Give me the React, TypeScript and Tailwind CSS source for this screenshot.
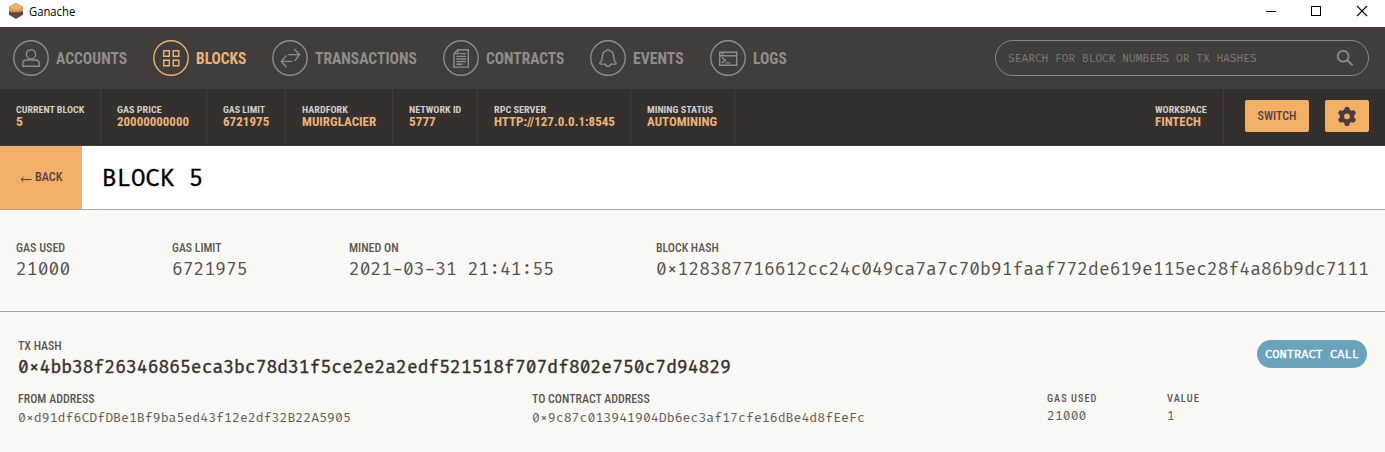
import { useLayoutEffect, useRef, useState } from "react";
import type { ReactNode } from "react";

/* Condenses a single line of text so that it fills exactly `w` pixels. */
function Fit({ w, className = "", children }: { w: number; className?: string; children: ReactNode }) {
  const ref = useRef<HTMLSpanElement>(null);
  const [scale, setScale] = useState(1);
  useLayoutEffect(() => {
    if (ref.current) setScale(w / ref.current.offsetWidth);
  }, [w]);
  return (
    <span className={`block overflow-visible whitespace-nowrap ${className}`} style={{ width: w }}>
      <span ref={ref} className="inline-block origin-left align-top" style={{ transform: `scaleX(${scale})` }}>
        {children}
      </span>
    </span>
  );
}

const COND = "font-['Roboto_Condensed',Roboto,sans-serif]";
const MONO = "font-['Fira_Code','DejaVu_Sans_Mono',monospace]";

const navItems: { label: string; w: number; active?: boolean; icon: ReactNode }[] = [
  {
    label: "ACCOUNTS",
    w: 71,
    icon: (
      <>
        <circle cx="18" cy="14.3" r="4.6" />
        <path d="M9.8 26.2v-2.6c0-2.2 1.6-3.6 3.8-3.6h8.8c2.2 0 3.8 1.4 3.8 3.6v2.6z" />
      </>
    ),
  },
  {
    label: "BLOCKS",
    w: 50,
    active: true,
    icon: <path d="M10.7 10.7h5.6v5.6h-5.6zM20.2 10.7h5.6v5.6h-5.6zM10.7 20.2h5.6v5.6h-5.6zM20.2 20.2h5.6v5.6h-5.6z" />,
  },
  {
    label: "TRANSACTIONS",
    w: 102,
    icon: <path d="M16.2 14.6h10.6M22.2 9l5.2 5.6-4.6 6.2M20.2 21.4H9.4M14.4 15.4l-5 6 5 5.6" />,
  },
  {
    label: "CONTRACTS",
    w: 78,
    icon: (
      <>
        <path d="M15 9.7h10.3v17.4H11V13.6z" />
        <path d="M15 9.7v3.9h-4" />
        <path d="M16.5 13.6H23M13.3 16.4H23M13.3 19H23M13.3 21.6H23M13.3 24.2h6.4" />
      </>
    ),
  },
  {
    label: "EVENTS",
    w: 51,
    icon: (
      <path d="M16.6 10.6a1.5 1.5 0 0 1 2.8 0c2.7.7 4.2 2.9 4.2 5.7 0 3.4.6 4.9 2.3 6.300.5.5.2 1.5-.6 1.5h-4.800c-.3 1.5-1.1 2.3-2.5 2.3s-2.2-.8-2.5-2.3h-4.800c-.8 0-1.1-1-.6-1.500 1.7-1.4 2.3-2.9 2.3-6.300 0-2.8 1.5-5 4.2-5.700z" />
    ),
  },
  {
    label: "LOGS",
    w: 34,
    icon: (
      <>
        <path d="M9.7 12.2h17v13.1h-17zM9.7 15.7h17M12.6 12.4v3" />
        <path d="M12 17.6l3.4 2.6-3.4 2.7M15.6 22.9h4.6" />
      </>
    ),
  },
];

const stats = [
  { label: "CURRENT BLOCK", lw: 68.5, value: "5", vw: 6.5, cls: "w-[101px]" },
  { label: "GAS PRICE", lw: 44.5, value: "20000000000", vw: 72.5, cls: "w-[106px]" },
  { label: "GAS LIMIT", lw: 42.5, value: "6721975", vw: 46, cls: "w-[79px]" },
  { label: "HARDFORK", lw: 45.5, value: "MUIRGLACIER", vw: 74, cls: "w-[107px]" },
  { label: "NETWORK ID", lw: 52.5, value: "5777", vw: 26.5, cls: "w-[85px]" },
  { label: "RPC SERVER", lw: 52, value: "HTTP://127.0.0.1:8545", vw: 121, cls: "w-[153px]" },
  { label: "MINING STATUS", lw: 66, value: "AUTOMINING", vw: 70.5, cls: "w-[104px]" },
];

function Stat({ label, lw, value, vw, cls }: (typeof stats)[number]) {
  return (
    <div className={`h-[55px] shrink-0 border-r border-[#413d3a] pt-[15px] pl-[15.6px] font-bold ${COND} ${cls}`}>
      <Fit w={lw} className="text-[9.8px] leading-3 text-[#cfcdcb]">{label}</Fit>
      <Fit w={vw} className="text-[12.5px] leading-3 text-[#e9b27b]">{value}</Fit>
    </div>
  );
}

function Field({ label, lw, value, vw, cls = "" }: { label: string; lw: number; value: string; vw: number; cls?: string }) {
  return (
    <div className={`shrink-0 ${cls}`}>
      <Fit w={lw} className={`text-[12px] leading-4 font-medium text-[#5a5653] ${COND}`}>{label}</Fit>
      <Fit w={vw} className={`text-[17px] leading-[28px] text-[#55514e] ${MONO}`}>{value}</Fit>
    </div>
  );
}

export default function App() {
  return (
    <div className="flex h-[452px] w-[1385px] flex-col overflow-hidden bg-[#faf9f5]">
      <header className="flex h-[27px] shrink-0 items-start bg-white text-black">
        <svg className="mt-[3px] ml-2 h-4 w-4" viewBox="0 0 16 16">
          <path d="M8 0l7 3.7v8L8 16l-7-4.3v-8z" fill="#5f474c" />
          <path d="M8 0l7 3.7v4.3l-2 1-1.5-.7L10 9.7 8 8.6 6 10 4.5 8.5 3 9.2 1 7.7v-4z" fill="#dd9a55" />
          <path d="M8 0l7 3.7L8 7.5 1 3.7z" fill="#efb26c" />
        </svg>
        <Fit w={46} className="ml-[5px] pt-1 font-['Open_Sans',sans-serif] text-[12px] leading-4">Ganache</Fit>
        <svg className="ml-auto h-[27px] w-[130px]" viewBox="0 0 130 27" fill="none" stroke="#000" shapeRendering="crispEdges">
          <path d="M11 11.5h10M56.5 6.5h9v9h-9z" />
          <path d="M102 6l10 10M112 6l-10 10" shapeRendering="auto" strokeWidth="1.1" />
        </svg>
      </header>

      <nav className="flex h-[62px] shrink-0 items-center bg-[#413d3a] pr-4 pl-[13px]">
        <div className="flex gap-[26px]">
          {navItems.map((n) => (
            <div key={n.label} className={`flex items-center gap-[7px] ${n.active ? "text-[#e9b27b]" : "text-[#8f8c89]"}`}>
              <svg className="h-9 w-9" viewBox="0 0 36 36" fill="none" stroke="currentColor" strokeWidth="1.4">
                <circle cx="18" cy="18" r="17.2" />
                {n.icon}
              </svg>
              <Fit w={n.w} className={`pt-px pl-[0.4px] text-[16px] leading-5 font-bold ${COND}`}>{n.label}</Fit>
            </div>
          ))}
        </div>
        <div className="ml-auto flex h-9 w-[374px] items-center justify-between rounded-full border border-[#8a8784] pr-[14px] pl-3 text-[#7c7976]">
          <Fit w={248.5} className={`pt-[2px] text-[10.6px] leading-4 ${MONO}`}>SEARCH FOR BLOCK NUMBERS OR TX HASHES</Fit>
          <svg className="h-[18px] w-[18px]" viewBox="0 0 18 18" fill="none" stroke="#8f8c89" strokeWidth="1.8">
            <circle cx="7.2" cy="7.2" r="5.4" />
            <path d="M11 11l5.6 5.3" />
          </svg>
        </div>
      </nav>

      <div className="flex h-[57px] shrink-0 border-b border-[#433b39] bg-[#35302d]">
        {stats.map((s) => (
          <Stat key={s.label} {...s} />
        ))}
        <div className="ml-auto flex">
          <Stat label="WORKSPACE" lw={51.5} value="FINTECH" vw={46.5} cls="w-[85px]" />
          <button className="mt-[11px] ml-[21px] flex h-8 w-16 items-center justify-center rounded-[2px] bg-[#f2af67]">
            <Fit w={39} className={`text-[12px] leading-4 font-medium text-[#5b4043] ${COND}`}>SWITCH</Fit>
          </button>
          <button className="mt-[11px] mr-4 ml-4 flex h-8 w-11 items-center justify-center rounded-[2px] bg-[#f2af67]">
            <svg className="h-5 w-5" viewBox="0 0 20 20" fill="none" stroke="#4e3b40">
              <circle cx="10" cy="10.4" r="5.1" strokeWidth="4.4" />
              <path d="M10 3.4v1M10 16.400v1M4 6.900l.8.5M15.200 13.400l.8.5M4 13.900l.8-.5M15.200 7.400l.8-.5" strokeWidth="5.2" strokeLinecap="round" />
            </svg>
          </button>
        </div>
      </div>

      <div className="flex h-16 shrink-0 items-stretch border-b border-[#a6a5a2] bg-white">
        <button className="flex w-[82px] items-center gap-[3px] bg-[#f2af67] pl-5 text-[#5b4043]">
          <svg className="mt-[2px] h-2 w-3" viewBox="0 0 12 8" fill="none" stroke="currentColor" strokeWidth="1">
            <path d="M1 4.500h10.500M3.500 2.300L1 4.500l2.500 2.200" />
          </svg>
          <Fit w={27.5} className={`pb-[2px] text-[12px] leading-4 font-medium ${COND}`}>BACK</Fit>
        </button>
        <div className="flex items-center pt-[3px] pl-5">
          <Fit w={101} className={`text-[23px] leading-8 text-black [-webkit-text-stroke:0.4px_black] ${MONO}`}>BLOCK 5</Fit>
        </div>
      </div>

      <section className="flex h-[102px] shrink-0 border-b border-[#a6a5a2] pt-[30px] pl-4">
        <Field label="GAS USED" lw={49} value="21000" vw={54} cls="w-[156px]" />
        <Field label="GAS LIMIT" lw={50} value="6721975" vw={75.4} cls="w-[177px]" />
        <Field label="MINED ON" lw={50} value="2021-03-31 21:41:55" vw={205.2} cls="w-[307px]" />
        <Field label="BLOCK HASH" lw={63} value="0×128387716612cc24c049ca7a7c70b91faaf772de619e115ec28f4a86b9dc7111" vw={712.5} />
      </section>

      <section className="flex flex-col pt-[26px] pr-[18px] pl-[18px]">
        <div className="flex items-start justify-between">
          <div>
            <Fit w={43.5} className={`text-[12px] leading-4 font-medium text-[#5a5653] ${COND}`}>TX HASH</Fit>
            <Fit w={712.5} className={`text-[17px] leading-[28px] text-[#35302d] [-webkit-text-stroke:0.4px_#35302d] ${MONO}`}>
              0×4bb38f26346865eca3bc78d31f5ce2e2a2edf521518f707df802e750c7d94829
            </Fit>
          </div>
          <div className="mt-[2px] flex h-7 w-[110px] items-center justify-center rounded-full bg-[#6ba3ba]">
            <Fit w={94} className={`pt-[2px] text-[11.5px] leading-4 text-white [-webkit-text-stroke:0.4px_white] ${MONO}`}>CONTRACT CALL</Fit>
          </div>
        </div>
        <div className={`mt-[9px] flex text-[12.3px] text-[#605c59] ${MONO}`}>
          <div className="w-[514.3px]">
            <Fit w={76.5} className={`text-[12px] leading-4 font-medium text-[#5a5653] ${COND}`}>FROM ADDRESS</Fit>
            <Fit w={333} className="leading-[24px]">0×d91df6CDfDBe1Bf9ba5ed43f12e2df32B22A5905</Fit>
          </div>
          <div className="w-[514.7px]">
            <Fit w={118} className={`text-[12px] leading-4 font-medium text-[#5a5653] ${COND}`}>TO CONTRACT ADDRESS</Fit>
            <Fit w={333} className="leading-[24px]">0×9c87c013941904Db6ec3af17cfe16dBe4d8fEeFc</Fit>
          </div>
          <div className="w-[120px]">
            <Fit w={50.5} className={`text-[10px] leading-4 font-medium tracking-[1px] text-[#5a5653] ${COND}`}>GAS USED</Fit>
            <Fit w={39.6} className="leading-[20px]">21000</Fit>
          </div>
          <div>
            <Fit w={32.5} className={`text-[10px] leading-4 font-medium tracking-[1px] text-[#5a5653] ${COND}`}>VALUE</Fit>
            <Fit w={7.9} className="leading-[20px]">1</Fit>
          </div>
        </div>
      </section>
    </div>
  );
}
